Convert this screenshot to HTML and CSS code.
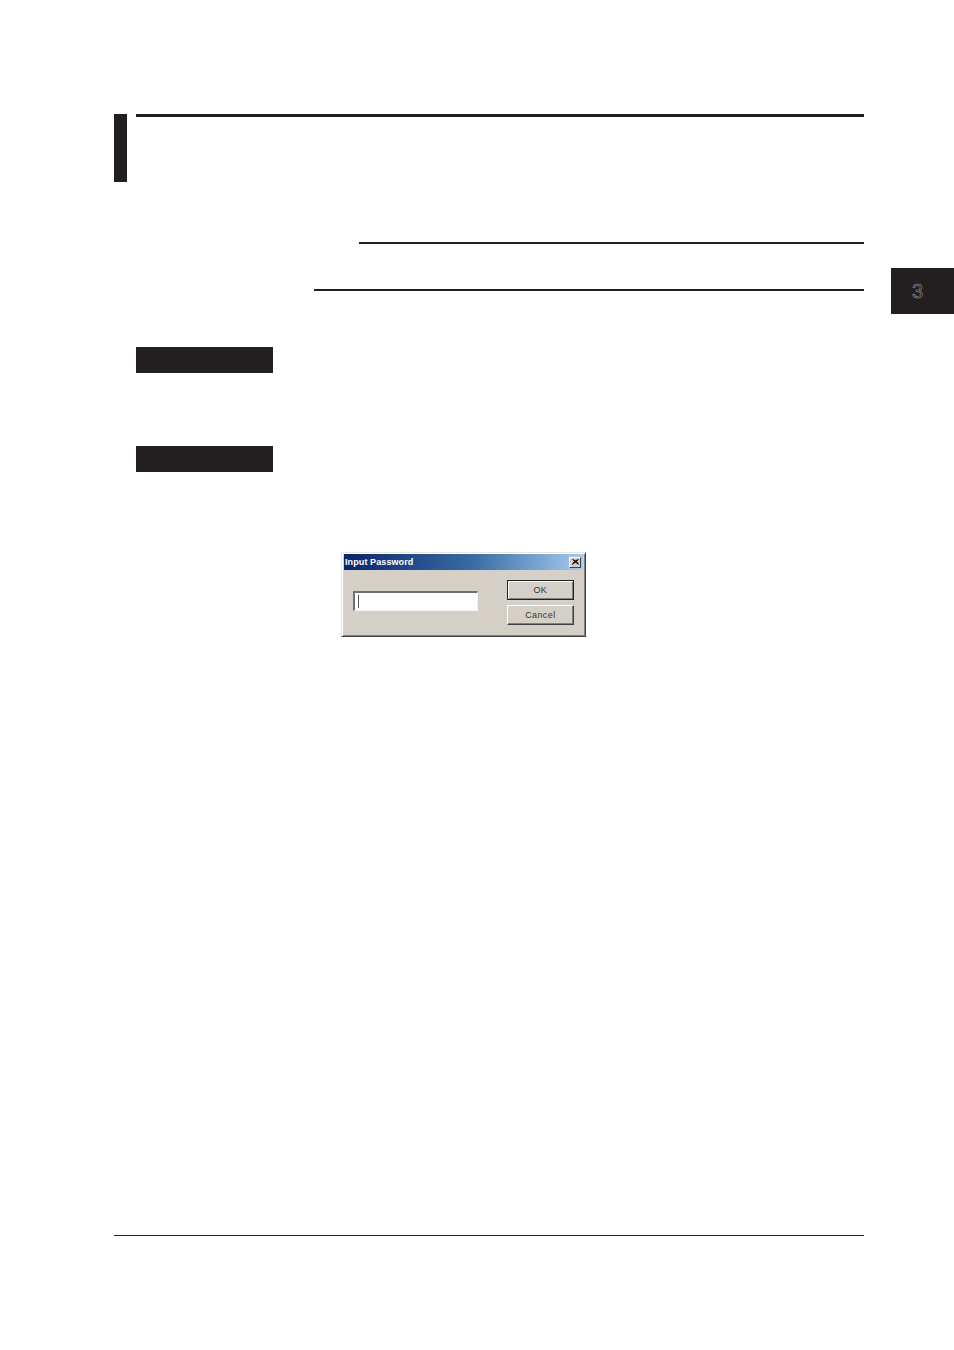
FILE: index.html
```html
<!DOCTYPE html>
<html>
<head>
<meta charset="utf-8">
<link rel="stylesheet" href="styles.css">
</head>
<body>
<div class="page">
  <div class="chapter-tab"><span class="tab-num">3</span></div>
  <div class="header">
    <div class="header-bar"></div>
    <div class="header-rule"></div>
  </div>
  <div class="rule rule-one"></div>
  <div class="rule rule-two"></div>
  <div class="label-box label-one"></div>
  <div class="label-box label-two"></div>
  <div class="dialog">
    <div class="titlebar">
      <span class="title">Input Password</span>
      <span class="close-btn">
        <svg width="7" height="6" viewBox="0 0 7 6"><path d="M0.5 0.5 L6.5 5.5 M1.5 0.5 L6.5 4.5 M6.5 0.5 L0.5 5.5 M5.5 0.5 L0.5 4.5" stroke="#000" stroke-width="1" fill="none"/></svg>
      </span>
    </div>
    <div class="dialog-body">
      <div class="field-col">
        <div class="input"><span class="caret"></span></div>
      </div>
      <div class="btn-col">
        <div class="btn btn-default"><span>OK</span></div>
        <div class="btn"><span>Cancel</span></div>
      </div>
    </div>
  </div>
  <div class="footer-rule"></div>
</div>
</body>
</html>
```
FILE: styles.css
```css
html, body {
  margin: 0;
  padding: 0;
  background: #ffffff;
}
.page {
  position: relative;
  width: 954px;
  height: 1350px;
  padding-top: 114px;
  box-sizing: border-box;
  font-family: "Liberation Sans", Arial, sans-serif;
}
.chapter-tab {
  position: absolute;
  left: 891px;
  top: 268px;
  width: 63px;
  height: 46px;
  background: #231f20;
  display: flex;
  align-items: center;
  justify-content: center;
}
.tab-num {
  font-family: "Liberation Sans", Arial, sans-serif;
  font-size: 20px;
  color: #231f20;
  -webkit-text-stroke: 0.5px #a0a0a0;
  line-height: 1;
  margin-left: -10px;
}
.header {
  display: flex;
  margin-left: 114px;
  width: 750px;
}
.header-bar {
  width: 13px;
  height: 68px;
  background: #231f20;
}
.header-rule {
  flex: 1;
  margin-left: 9px;
  height: 3px;
  background: #231f20;
}
.rule {
  height: 2px;
  background: #231f20;
}
.rule-one {
  margin-top: 60px;
  margin-left: 359px;
  width: 505px;
}
.rule-two {
  margin-top: 45px;
  margin-left: 314px;
  width: 550px;
}
.label-box {
  margin-left: 136px;
  width: 137px;
  height: 26px;
  background: #231f20;
}
.label-one {
  margin-top: 56px;
}
.label-two {
  margin-top: 73px;
}
.dialog {
  margin-top: 80px;
  margin-left: 341px;
  width: 245px;
  height: 85px;
  box-sizing: border-box;
  background: #d4d0c8;
  border-top: 1px solid #e8e6e0;
  border-left: 1px solid #e8e6e0;
  border-right: 1px solid #404040;
  border-bottom: 1px solid #404040;
  box-shadow: inset 1px 1px 0 #ffffff, inset -1px -1px 0 #808080;
  padding: 1px 2px 2px 2px;
  display: flex;
  flex-direction: column;
}
.titlebar {
  height: 16px;
  background: linear-gradient(to right, #0a246a 0%, #3a6ea5 55%, #a6caf0 100%);
  display: flex;
  align-items: center;
  justify-content: space-between;
  padding: 0 2px 0 1px;
}
.title {
  color: #ffffff;
  font-family: "Liberation Sans", Arial, sans-serif;
  font-weight: bold;
  font-size: 9px;
  letter-spacing: 0.1px;
  margin-top: -1px;
}
.close-btn {
  width: 12px;
  height: 11px;
  box-sizing: border-box;
  background: #d4d0c8;
  border-top: 1px solid #ffffff;
  border-left: 1px solid #ffffff;
  border-right: 1px solid #404040;
  border-bottom: 1px solid #404040;
  display: flex;
  align-items: center;
  justify-content: center;
}
.close-btn svg {
  display: block;
}
.dialog-body {
  flex: 1;
  display: flex;
  padding: 10px 9px 0 9px;
}
.field-col {
  width: 126px;
  padding-top: 11px;
}
.input {
  height: 20px;
  box-sizing: border-box;
  background: #ffffff;
  border-top: 2px solid #6f6f6f;
  border-left: 2px solid #6f6f6f;
  border-right: 1px solid #f4f4f4;
  border-bottom: 1px solid #f4f4f4;
  padding: 2px 0 0 3px;
}
.caret {
  display: block;
  width: 1px;
  height: 13px;
  background: #555555;
}
.btn-col {
  margin-left: 29px;
  width: 68px;
  display: flex;
  flex-direction: column;
  gap: 5px;
}
.btn {
  height: 20px;
  box-sizing: border-box;
  background: #d4d0c8;
  border-top: 1px solid #ffffff;
  border-left: 1px solid #ffffff;
  border-right: 1px solid #404040;
  border-bottom: 1px solid #404040;
  box-shadow: inset -1px -1px 0 #808080;
  display: flex;
  align-items: center;
  justify-content: center;
  font-family: "Liberation Sans", Arial, sans-serif;
  font-size: 9px;
  color: #333333;
  letter-spacing: 0.4px;
}
.btn-default {
  border: 1px solid #222222;
  box-shadow: inset 1px 1px 0 #ffffff, inset -1px -1px 0 #808080;
}
.footer-rule {
  margin-top: 598px;
  margin-left: 114px;
  width: 750px;
  height: 1px;
  background: #231f20;
}
```
